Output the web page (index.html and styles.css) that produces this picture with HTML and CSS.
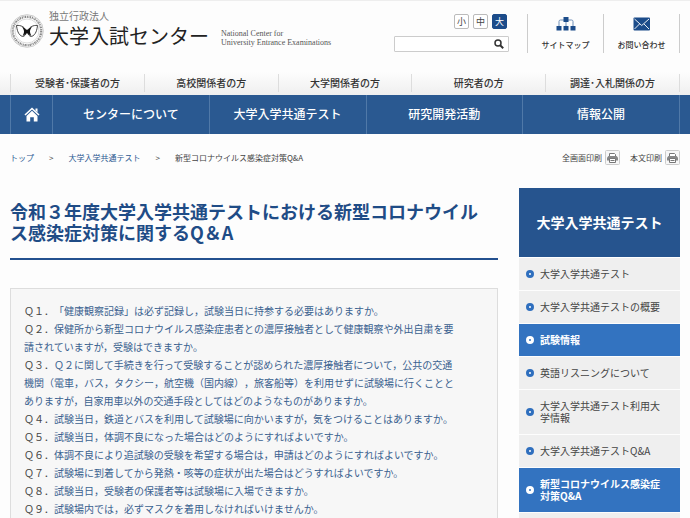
FILE: index.html
```html
<!DOCTYPE html>
<html lang="ja">
<head>
<meta charset="utf-8">
<meta name="viewport" content="width=device-width, initial-scale=1">
<title>新型コロナウイルス感染症対策Q&amp;A | 大学入試センター</title>
<link rel="stylesheet" href="styles.css">
</head>
<body>
<header class="header">
  <a class="brand" href="#">
    <svg class="brand-mark" viewBox="0 0 34 34" aria-hidden="true">
      <circle cx="17" cy="17" r="16.3" fill="none" stroke="#aaa" stroke-width=".6"/>
      <circle cx="17" cy="17" r="14.2" fill="none" stroke="#888" stroke-width="2.2" stroke-dasharray="1.1 .7 .6 .5 1.4 .8"/>
      <circle cx="17" cy="17" r="12" fill="#fff" stroke="#bbb" stroke-width=".5"/>
      <path d="M6.5 11.5C11 11 14.5 13 16 16.5L17 15.5L18 16.5C19.500 13 23 11 27.500 11.500C27 15.500 26 21 21.500 22.500C19 22.500 18.300 20 17 18.500C15.700 20 15 22.500 12.500 22.500C8 21 7 15.500 6.500 11.500Z" fill="#fff" stroke="#333" stroke-width=".9"/>
      <path d="M12 12.500C15 14 15.500 16 17 16C18.500 16 19 14 22 12.500C20.500 15 20 16 20 17.500C20 19 20.500 20 21.500 22C18.500 21 18 19 17 19C16 19 15.500 21 12.500 22C13.500 20 14 19 14 17.500C14 16 13.500 15 12 12.500Z" fill="#111"/>
    </svg>
    <span class="brand-names">
      <span class="brand-type">独立行政法人</span>
      <span class="brand-name">大学入試センター</span>
    </span>
    <span class="brand-en">National Center for<br>University Entrance Examinations</span>
  </a>
  <div class="tools">
    <div class="sizes">
      <button class="size" type="button">小</button>
      <button class="size" type="button">中</button>
      <button class="size size-on" type="button">大</button>
    </div>
    <form class="search" role="search">
      <input class="search-input" type="search" aria-label="サイト内検索">
      <button class="search-button" type="submit" aria-label="検索">
        <svg viewBox="0 0 10 10" width="10" height="10" aria-hidden="true"><circle cx="4" cy="4" r="3" fill="none" stroke="#333" stroke-width="1.500"/><path d="M6.200 6.200L9.200 9.200" stroke="#333" stroke-width="2"/></svg>
      </button>
    </form>
  </div>
  <nav class="quick" aria-label="補助">
    <a class="quick-link" href="#">
      <svg viewBox="0 0 20 14" width="20" height="14" aria-hidden="true"><path d="M3 9V4.500Q3 3 4.500 3H15.500Q17 3 17 4.500V9M10 4V9" fill="none" stroke="#6e8fb8"/><path d="M7.500 0h5v5h-5zM.5 9h5v4.500h-5zM7.500 9h5v4.500h-5zM14.500 9h5v4.500h-5z" fill="#1c4c8a"/></svg>
      サイトマップ
    </a>
    <a class="quick-link" href="#">
      <svg viewBox="0 0 18 14" width="18" height="14" aria-hidden="true"><rect x=".5" y=".5" width="16.500" height="13" rx="1" fill="#1c4c8a"/><path d="M1.500 2L8.700 8.500L16 2M1.500 12L6.500 7M16 12L11 7" fill="none" stroke="#fff" stroke-width=".9"/></svg>
      お問い合わせ
    </a>
  </nav>
</header>

<nav class="audience" aria-label="対象者別">
  <a href="#">受験者･保護者の方</a>
  <a href="#">高校関係者の方</a>
  <a href="#">大学関係者の方</a>
  <a href="#">研究者の方</a>
  <a href="#">調達･入札関係の方</a>
</nav>

<nav class="global" aria-label="メイン">
  <div class="global-inner">
    <a class="home" href="#" aria-label="ホーム">
      <svg viewBox="0 0 16 15" width="16" height="15" aria-hidden="true"><path d="M8 3.800L13.500 9V14.500H9.800V10.200H6.200V14.500H2.500V9Z" fill="#fff"/><path d="M1 8L8 1.500L15 8" fill="none" stroke="#fff" stroke-width="1.600"/><path d="M11.500 1.500h2v4l-2-2z" fill="#fff"/></svg>
    </a>
    <a href="#">センターについて</a>
    <a href="#">大学入学共通テスト</a>
    <a href="#">研究開発活動</a>
    <a href="#">情報公開</a>
  </div>
</nav>

<div class="trail">
  <nav class="crumbs" aria-label="パンくず">
    <a href="#">トップ</a><span>&gt;</span><a href="#">大学入学共通テスト</a><span>&gt;</span><span>新型コロナウイルス感染症対策Q&amp;A</span>
  </nav>
  <div class="prints">
    <button class="print" type="button">全画面印刷
      <svg viewBox="0 0 15 15" width="15" height="15" aria-hidden="true"><rect x=".5" y=".5" width="14" height="14" rx="1" fill="#f7f7f7" stroke="#ccc"/><path d="M4.500 6V3.500H9.500L10.500 4.500V6" fill="#fff" stroke="#777"/><path d="M2 7.500L3.500 6H11.500L13 7.500V10.500H2Z" fill="#888"/><path d="M4.500 8.500H10.500V12.500H4.500ZM5.500 10.500H9.500" fill="#fff" stroke="#777"/></svg>
    </button>
    <button class="print" type="button">本文印刷
      <svg viewBox="0 0 15 15" width="15" height="15" aria-hidden="true"><rect x=".5" y=".5" width="14" height="14" rx="1" fill="#f7f7f7" stroke="#ccc"/><path d="M4.500 6V3.500H9.500L10.500 4.500V6" fill="#fff" stroke="#777"/><path d="M2 7.500L3.500 6H11.500L13 7.500V10.500H2Z" fill="#888"/><path d="M4.500 8.500H10.500V12.500H4.500ZM5.500 10.500H9.500" fill="#fff" stroke="#777"/></svg>
    </button>
  </div>
</div>

<div class="columns">
  <main class="main">
    <h1>令和３年度大学入学共通テストにおける新型コロナウイルス感染症対策に関するQ＆A</h1>
    <div class="questions">
      <p>Ｑ１．<a href="#">「健康観察記録」は必ず記録し，試験当日に持参する必要はありますか。</a></p>
      <p>Ｑ２．<a href="#">保健所から新型コロナウイルス感染症患者との濃厚接触者として健康観察や外出自粛を要<br>請されていますが，受験はできますか。</a></p>
      <p>Ｑ３．<a href="#">Ｑ２に関して手続きを行って受験することが認められた濃厚接触者について，公共の交通<br>機関（電車，バス，タクシー，航空機（国内線），旅客船等）を利用せずに試験場に行くことと<br>ありますが，自家用車以外の交通手段としてはどのようなものがありますか。</a></p>
      <p>Ｑ４．<a href="#">試験当日，鉄道とバスを利用して試験場に向かいますが，気をつけることはありますか。</a></p>
      <p>Ｑ５．<a href="#">試験当日，体調不良になった場合はどのようにすればよいですか。</a></p>
      <p>Ｑ６．<a href="#">体調不良により追試験の受験を希望する場合は，申請はどのようにすればよいですか。</a></p>
      <p>Ｑ７．<a href="#">試験場に到着してから発熱・咳等の症状が出た場合はどうすればよいですか。</a></p>
      <p>Ｑ８．<a href="#">試験当日，受験者の保護者等は試験場に入場できますか。</a></p>
      <p>Ｑ９．<a href="#">試験場内では，必ずマスクを着用しなければいけませんか。</a></p>
    </div>
  </main>
  <aside class="side">
    <h2>大学入学共通テスト</h2>
    <ul>
      <li><a href="#">大学入学共通テスト</a></li>
      <li><a href="#">大学入学共通テストの概要</a></li>
      <li><a class="current" href="#">試験情報</a></li>
      <li><a href="#">英語リスニングについて</a></li>
      <li><a href="#">大学入学共通テスト利用大<br>学情報</a></li>
      <li><a href="#">大学入学共通テストQ&amp;A</a></li>
      <li><a class="current" href="#">新型コロナウイルス感染症<br>対策Q&amp;A</a></li>
      <li class="rest"></li>
    </ul>
  </aside>
</div>
</body>
</html>
```
FILE: styles.css
```css
*, *::before { box-sizing: border-box; }

body {
  display: flex;
  flex-direction: column;
  height: 100vh;
  margin: 0;
  overflow: hidden;
  background: #fdfdfd;
  color: #444;
  font-family: "Noto Sans CJK JP", sans-serif;
  font-size: 10px;
  line-height: 18px;
  text-spacing-trim: space-all;
}

a { color: inherit; text-decoration: none; }
h1, h2, p, ul { margin: 0; padding: 0; }
ul { list-style: none; }
svg { display: block; flex: none; }

button {
  padding: 0;
  border: 0;
  background: none;
  color: inherit;
  font-family: inherit;
}

/* Header */
.header {
  display: flex;
  flex: none;
  align-items: flex-start;
  height: 72px;
  padding: 13px 10px 0;
  border-top: 1px solid #eee;
}

.brand { display: flex; margin-right: auto; white-space: nowrap; }
.brand-mark { width: 34px; height: 34px; }
.brand-names { display: flex; flex-direction: column; margin: -4px 12px 0 5px; }
.brand-type { color: #777; font-size: 10px; line-height: 12px; }
.brand-name { color: #222; font-size: 20px; line-height: 28px; }
.brand-en {
  padding-top: 15px;
  color: #555;
  font-family: "Liberation Serif", serif;
  font-size: 8px;
  line-height: 9px;
}

.tools {
  display: flex;
  flex-direction: column;
  align-items: flex-end;
  gap: 7px;
  margin-right: 18px;
}
.sizes { display: flex; gap: 4px; padding-right: 2px; }
.size {
  width: 15px;
  height: 15px;
  border: 1px solid #bbb;
  border-radius: 2px;
  background: #fff;
  font-size: 9px;
  line-height: 13px;
}
.size-on { border-color: #1c4c8a; background: #1c4c8a; color: #fff; }

.search {
  display: flex;
  width: 115px;
  height: 16px;
  border: 1px solid #ccc;
  border-radius: 1px;
  background: #fff;
}
.search-input {
  flex: 1;
  min-width: 0;
  padding: 0 4px;
  border: 0;
  background: none;
  font-size: 10px;
}
.search-button { display: grid; width: 18px; place-items: center; }

.quick { display: flex; height: 39px; border-left: 1px solid #ccc; }
.quick-link {
  display: flex;
  flex-direction: column;
  align-items: center;
  justify-content: space-between;
  width: 76px;
  padding: 3px 0 2px;
  border-right: 1px solid #ccc;
  color: #333;
  font-size: 8px;
  font-weight: 500;
  line-height: 12px;
}

/* Audience links */
.audience {
  display: flex;
  flex: none;
  height: 23px;
  padding: 2px 10px 3px;
  background: linear-gradient(#fdfdfd, #efefef);
}
.audience a {
  flex: 1;
  border-right: 1px solid #ddd;
  color: #333;
  font-weight: 500;
  text-align: center;
}
.audience a:first-child { border-left: 1px solid #ddd; }

/* Main navigation */
.global { flex: none; padding: 0 10px; background: #2a5991; }
.global-inner { display: flex; height: 39px; border-left: 1px solid #5079a8; }
.global a {
  flex: 1;
  border-right: 1px solid #5079a8;
  color: #fff;
  font-size: 12px;
  font-weight: 500;
  line-height: 38px;
  text-align: center;
}
.global .home { display: grid; flex: 0 0 42px; place-items: center; }

/* Breadcrumbs and print buttons */
.trail {
  display: flex;
  flex: none;
  align-items: center;
  justify-content: space-between;
  height: 54px;
  padding: 0 10px 7px;
  font-size: 8px;
}
.crumbs { display: flex; gap: 15px; }
.crumbs a { color: #2a5991; }
.prints { display: flex; gap: 10px; }
.print { display: flex; align-items: center; gap: 3px; font-size: 8px; }

/* Content */
.columns {
  display: flex;
  flex: 1;
  gap: 21px;
  min-height: 0;
  padding: 0 10px;
  overflow: hidden;
}
.main { display: flex; flex: 1; flex-direction: column; min-width: 0; padding-top: 13px; }
h1 {
  margin-bottom: 28px;
  padding: 0 14px 15px 0;
  border-bottom: 2px solid #23508f;
  color: #1f4c86;
  font-size: 18px;
  font-weight: 700;
  line-height: 21px;
  line-break: anywhere;
}
.questions {
  flex: 1;
  padding: 13px;
  border: 1px solid #ddd;
  background: #f7f7f7;
  white-space: nowrap;
}
.questions a { color: #3a618f; }

/* Side menu */
.side { flex: 0 0 161px; }
.side h2 {
  border-bottom: 1px solid #fff;
  background: #26548e;
  color: #fff;
  font-size: 14px;
  line-height: 69px;
  text-align: center;
}
.side li { border-bottom: 1px solid #fdfdfd; background: #efefef; }
.side li a {
  display: flex;
  align-items: center;
  gap: 6px;
  padding: 10px 8px 10px 7px;
  line-height: 12px;
  white-space: nowrap;
}
.side li a::before {
  flex: none;
  width: 8px;
  height: 8px;
  border: 3px solid #2f6fbe;
  border-radius: 50%;
  background: #fff;
  content: "";
}
.side li .current { background: #3373c0; color: #fff; font-weight: 700; }
.side li .current::before { border-color: #fff; background: #3373c0; }
.side .rest { height: 32px; }
```
